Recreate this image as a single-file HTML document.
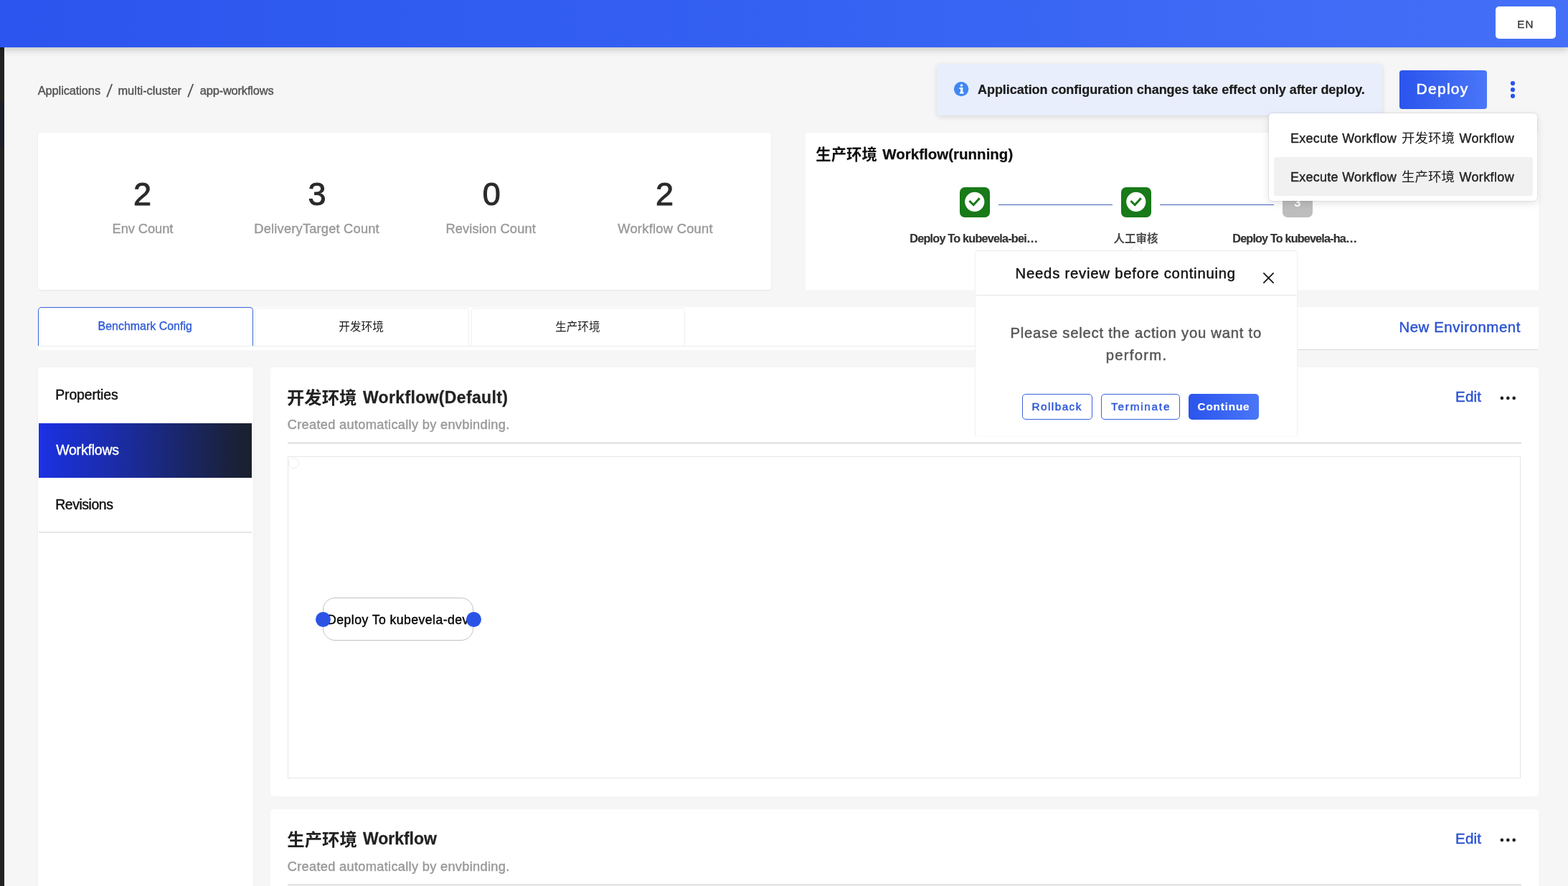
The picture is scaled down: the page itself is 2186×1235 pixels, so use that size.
<!DOCTYPE html>
<html lang="en">
<head>
<meta charset="utf-8">
<title>app-workflows</title>
<style>
*{box-sizing:border-box;margin:0;padding:0}
html,body{width:2186px;height:1235px;overflow:hidden}
body{position:relative;background:#f6f6f6;font-family:"Liberation Sans",sans-serif;color:#333}
.a{position:absolute}
.t{position:absolute;white-space:nowrap;line-height:1;font-family:"Liberation Sans",sans-serif}
.k{position:absolute;overflow:visible}
.k text{font-family:"Liberation Sans","Noto Sans CJK SC",sans-serif}
#textlayer{position:absolute;left:0;top:0;width:2186px;height:1235px;will-change:transform}
.card{position:absolute;background:#fff}
/* top bar */
#topbar{left:0;top:0;width:2186px;height:66px;background:linear-gradient(90deg,#2b55ee 0%,#3561f2 50%,#4470f8 100%);box-shadow:0 2px 11px rgba(0,0,0,.24)}
#strip1{left:0;top:66px;width:5.9px;height:1169px;background:#222}
#strip2{left:0;top:143px;width:5.9px;height:62px;background:#1a1f2b}
#en{left:2085px;top:9px;width:84px;height:45px;background:#fff;border-radius:5px}
/* alert */
#alert{left:1306.4px;top:89px;width:620.8px;height:72px;background:#e8eefc;border-radius:4px;box-shadow:0 2px 7px rgba(0,0,0,.12)}
#deploybtn{left:1951.3px;top:98.1px;width:121.5px;height:53.7px;border-radius:4px;background:linear-gradient(90deg,#2a54ec 0%,#4a76f8 100%)}
/* dropdown */
#dd{left:1768.7px;top:158.2px;width:374.7px;height:122px;background:#fff;border-radius:5px;box-shadow:0 3px 11px rgba(0,0,0,.12),0 0 0 1px rgba(0,0,0,.055)}
#ddhi{left:1776px;top:218.9px;width:360.8px;height:54.3px;background:#f1f1f1;border-radius:3px}
/* cards */
#stats{left:53px;top:185px;width:1022px;height:218.5px;border-radius:4px;box-shadow:0 1px 3px rgba(0,0,0,.07)}
#wf{left:1123px;top:185px;width:1022px;height:219px}
.step{position:absolute;top:261px;width:42px;height:42px;border-radius:7px;background:#187a18}
.line{position:absolute;top:284.9px;height:1px;background:#4561bb}
/* popup */
#pop{left:1359px;top:349px;width:450px;height:260.4px;background:#fff;border:1px solid #f1f0f1;border-top-color:#e9e9e9;border-bottom-color:#fafafa;border-radius:4px}
#poparrow{left:1576.4px;top:342.4px;width:15.6px;height:15.6px;background:#fff;border-left:1px solid #e9e9e9;border-top:1px solid #e9e9e9;transform:rotate(45deg)}
#popdiv{left:1360.6px;top:411.1px;width:446.8px;height:1px;background:#e6e6e6}
.btn{position:absolute;top:549.2px;height:35.4px;border-radius:5px;border:1px solid #3c62da;background:#fff}
/* tabs */
#tabs{left:53px;top:428px;width:2092px;height:60px}
#tabline1{left:53px;top:482.4px;width:1755px;height:1px;background:#ebebeb}
#tabline2{left:1808px;top:486.8px;width:337px;height:1px;background:#dadada}
#tab1{left:53px;top:428px;width:300px;height:55px;border:1px solid #3a62d8;border-bottom:none;border-radius:5px 5px 0 0;background:#fff}
.tabx{position:absolute;top:428.5px;height:54.5px;border:1px solid #f0f0f0;border-bottom:none;border-radius:5px 5px 0 0;background:#fff}
/* menu */
#menu{left:53px;top:512px;width:299.7px;height:740px;border-radius:4px;box-shadow:0 1px 3px rgba(0,0,0,.06)}
#menuact{left:54.2px;top:590.2px;width:296.8px;height:75.5px;background:linear-gradient(90deg,#1c31e4 0%,#1a2b9a 43%,#1a2668 68%,#1a2244 86%,#1b202b 100%)}
#menudiv{left:54px;top:741.2px;width:297px;height:1.4px;background:#e7e7e7}
/* main cards */
#c1{left:377px;top:512px;width:1768px;height:597.6px;border-radius:5px}
#c2{left:377px;top:1128px;width:1768px;height:130px;border-radius:5px}
.hr{position:absolute;left:401.2px;width:1719.6px;height:1px;background:#c6c6c6}
#canvas{left:401.2px;top:636.1px;width:1719.2px;height:449.3px;border:1px solid #e6e6e6;background:#fff}
#mini{left:402.3px;top:638.2px;width:14.5px;height:14.5px;border:1px solid #ececec;border-radius:50%}
#node{left:450px;top:833px;width:210px;height:60px;border:1px solid #c2c2c2;border-radius:17px;background:#fff}
.port{position:absolute;top:853.2px;width:20.8px;height:20.8px;border-radius:50%;background:#2b54e6;z-index:5}
</style>
</head>
<body>

<!-- base cards -->
<div class="card" id="stats"></div>
<div class="card" id="wf"></div>

<!-- workflow steps -->
<div class="step" style="left:1338px"></div>
<div class="step" style="left:1563px"></div>
<div class="step" style="left:1788px;background:#bdbdbd"></div>
<div class="t" style="left:1804.3px;top:274.3px;font-size:16.2px;font-weight:700;color:#fff">3</div>
<div class="line" style="left:1392.3px;width:158.7px"></div>
<div class="line" style="left:1617.4px;width:158.2px"></div>
<svg class="a" style="left:1338px;top:261px" width="42" height="42" viewBox="0 0 42 42"><circle cx="20.8" cy="20.3" r="13.6" fill="#fff"/><path d="M13.4 19.0 L19.2 24.6 L27.7 15.3" fill="none" stroke="#187a18" stroke-width="3"/></svg>
<svg class="a" style="left:1563px;top:261px" width="42" height="42" viewBox="0 0 42 42"><circle cx="20.8" cy="20.3" r="13.6" fill="#fff"/><path d="M13.4 19.0 L19.2 24.6 L27.7 15.3" fill="none" stroke="#187a18" stroke-width="3"/></svg>

<!-- tabs -->
<div class="card" id="tabs"></div>
<div class="a" id="tab1"></div>
<div class="tabx" style="left:355px;width:299px"></div>
<div class="tabx" style="left:656.6px;width:298.8px"></div>
<div class="a" id="tabline1"></div>
<div class="a" id="tabline2"></div>

<!-- left menu -->
<div class="card" id="menu"></div>
<div class="a" id="menuact"></div>
<div class="a" id="menudiv"></div>

<!-- main cards -->
<div class="card" id="c1"></div>
<div class="hr" style="top:616.8px"></div>
<div class="a" id="canvas"></div>
<div class="a" id="mini"></div>
<div class="a" id="node"></div>
<div class="port" style="left:439.9px"></div>
<div class="port" style="left:650.3px"></div>
<svg class="a" style="left:2088px;top:550px" width="30" height="10" viewBox="0 0 30 10"><circle cx="5.9" cy="4.9" r="2.3" fill="#222"/><circle cx="14.3" cy="4.9" r="2.3" fill="#222"/><circle cx="22.7" cy="4.9" r="2.3" fill="#222"/></svg>

<div class="card" id="c2"></div>
<div class="hr" style="top:1233.2px"></div>
<svg class="a" style="left:2088px;top:1166px" width="30" height="10" viewBox="0 0 30 10"><circle cx="5.9" cy="4.9" r="2.3" fill="#222"/><circle cx="14.3" cy="4.9" r="2.3" fill="#222"/><circle cx="22.7" cy="4.9" r="2.3" fill="#222"/></svg>

<!-- left dark strip + top bar -->
<div class="a" id="strip1"></div>
<div class="a" id="strip2"></div>
<div class="a" id="topbar"></div>
<div class="a" id="en"></div>

<!-- alert + deploy -->
<div class="a" id="alert"></div>
<svg class="a" style="left:1329.9px;top:113.8px;overflow:visible" width="21" height="21" viewBox="0 0 21 21"><circle cx="10.1" cy="10.1" r="10.2" fill="#4187f2"/><circle cx="10.5" cy="4.9" r="1.75" fill="#fff"/><path d="M7.4 7.9H12.3V14.5H13.6V16.5H7.9V14.5H9.1V9.9H7.4Z" fill="#fff"/></svg>
<div class="a" id="deploybtn"></div>
<svg class="a" style="left:2103.5px;top:111px" width="10" height="28" viewBox="0 0 10 28"><circle cx="5" cy="5.1" r="3.1" fill="#2a54ec"/><circle cx="5" cy="14.1" r="3.1" fill="#2a54ec"/><circle cx="5" cy="22.8" r="3.1" fill="#2a54ec"/></svg>

<!-- popup -->
<div class="a" id="poparrow"></div>
<div class="a" id="pop"></div>
<div class="a" style="left:1573px;top:350.6px;width:23px;height:8px;background:#fff"></div>
<div class="a" id="popdiv"></div>
<svg class="a" style="left:1760.2px;top:379.2px" width="17" height="17" viewBox="0 0 17 17"><path d="M1.4 1.4 L15.6 15.6 M15.6 1.4 L1.4 15.6" stroke="#111" stroke-width="1.7" fill="none"/></svg>
<div class="btn" style="left:1425.3px;width:97.4px"></div>
<div class="btn" style="left:1535.3px;width:109.4px"></div>
<div class="btn" style="left:1657.3px;width:97.4px;border:none;background:linear-gradient(90deg,#2a54ec 0%,#4a76f8 100%)"></div>

<!-- dropdown -->
<div class="a" id="dd"></div>
<div class="a" id="ddhi"></div>

<!-- breadcrumb slashes -->
<svg class="a" style="left:146px;top:115px" width="14" height="23" viewBox="0 0 14 23"><path d="M3.1 20.3 L10.2 2" stroke="#555" stroke-width="1.9" fill="none"/></svg>
<svg class="a" style="left:259.4px;top:115px" width="14" height="23" viewBox="0 0 14 23"><path d="M3.1 20.3 L10.2 2" stroke="#555" stroke-width="1.9" fill="none"/></svg>
<!-- text -->
<div id="textlayer">
<div class="t" id="t_bc1" style="left:52.70px;top:117.71px;font-size:16.4px;font-weight:400;color:#4f4f4f;letter-spacing:-0.089px;-webkit-text-stroke:0.36px #4f4f4f">Applications</div>
<div class="t" id="t_bc3" style="left:164.40px;top:117.71px;font-size:16.4px;font-weight:400;color:#4f4f4f;letter-spacing:0.027px;-webkit-text-stroke:0.36px #4f4f4f">multi-cluster</div>
<div class="t" id="t_bc5" style="left:278.80px;top:117.71px;font-size:16.4px;font-weight:400;color:#4f4f4f;letter-spacing:-0.163px;-webkit-text-stroke:0.36px #4f4f4f">app-workflows</div>
<div class="t" id="t_en" style="left:2115.30px;top:26.03px;font-size:15.2px;font-weight:400;color:#383838;letter-spacing:0.970px;-webkit-text-stroke:0.33px #383838">EN</div>
<div class="t" id="t_alert" style="left:1363.00px;top:115.86px;font-size:18.0px;font-weight:700;color:#1c1c1c;letter-spacing:-0.047px;-webkit-text-stroke:0.22px #1c1c1c">Application configuration changes take effect only after deploy.</div>
<div class="t" id="t_deploy" style="left:1974.60px;top:113.42px;font-size:21.0px;font-weight:400;color:#fff;letter-spacing:1.266px;-webkit-text-stroke:0.59px #fff">Deploy</div>
<div class="t" id="t_dd1a" style="left:1799.00px;top:183.96px;font-size:18.0px;font-weight:400;color:#222;letter-spacing:0.265px;-webkit-text-stroke:0.40px #222">Execute Workflow</div>
<div class="t" id="t_dd1b" style="left:2034.40px;top:183.96px;font-size:18.0px;font-weight:400;color:#222;letter-spacing:0.374px;-webkit-text-stroke:0.40px #222">Workflow</div>
<div class="t" id="t_dd2a" style="left:1799.00px;top:237.86px;font-size:18.0px;font-weight:400;color:#222;letter-spacing:0.265px;-webkit-text-stroke:0.40px #222">Execute Workflow</div>
<div class="t" id="t_dd2b" style="left:2034.40px;top:237.86px;font-size:18.0px;font-weight:400;color:#222;letter-spacing:0.374px;-webkit-text-stroke:0.40px #222">Workflow</div>
<div class="t" id="t_n1" style="left:186.00px;top:248.40px;font-size:45.0px;font-weight:400;color:#2a2a2a;letter-spacing:0.000px;-webkit-text-stroke:0.99px #2a2a2a">2</div>
<div class="t" id="t_n2" style="left:429.50px;top:248.40px;font-size:45.0px;font-weight:400;color:#2a2a2a;letter-spacing:0.000px;-webkit-text-stroke:0.99px #2a2a2a">3</div>
<div class="t" id="t_n3" style="left:672.70px;top:248.40px;font-size:45.0px;font-weight:400;color:#2a2a2a;letter-spacing:0.000px;-webkit-text-stroke:0.99px #2a2a2a">0</div>
<div class="t" id="t_n4" style="left:914.00px;top:248.40px;font-size:45.0px;font-weight:400;color:#2a2a2a;letter-spacing:0.000px;-webkit-text-stroke:0.99px #2a2a2a">2</div>
<div class="t" id="t_l1" style="left:156.50px;top:309.71px;font-size:18.3px;font-weight:400;color:#999;letter-spacing:-0.060px;-webkit-text-stroke:0.40px #999">Env Count</div>
<div class="t" id="t_l2" style="left:354.30px;top:309.71px;font-size:18.3px;font-weight:400;color:#999;letter-spacing:0.194px;-webkit-text-stroke:0.40px #999">DeliveryTarget Count</div>
<div class="t" id="t_l3" style="left:621.40px;top:309.71px;font-size:18.3px;font-weight:400;color:#999;letter-spacing:0.108px;-webkit-text-stroke:0.40px #999">Revision Count</div>
<div class="t" id="t_l4" style="left:861.20px;top:309.71px;font-size:18.3px;font-weight:400;color:#999;letter-spacing:0.284px;-webkit-text-stroke:0.40px #999">Workflow Count</div>
<div class="t" id="t_wft" style="left:1230.30px;top:204.94px;font-size:20.5px;font-weight:700;color:#0d0d0d;letter-spacing:0.007px;-webkit-text-stroke:0.25px #0d0d0d">Workflow(running)</div>
<div class="t" id="t_s1" style="left:1268.30px;top:323.88px;font-size:16.2px;font-weight:700;color:#333;letter-spacing:-0.773px;-webkit-text-stroke:0.19px #333">Deploy To kubevela-bei…</div>
<div class="t" id="t_s3" style="left:1718.30px;top:323.88px;font-size:16.2px;font-weight:700;color:#333;letter-spacing:-0.834px;-webkit-text-stroke:0.19px #333">Deploy To kubevela-ha…</div>
<div class="t" id="t_pt" style="left:1415.60px;top:370.61px;font-size:20.3px;font-weight:400;color:#111;letter-spacing:0.772px;-webkit-text-stroke:0.45px #111">Needs review before continuing</div>
<div class="t" id="t_pb1" style="left:1408.50px;top:454.21px;font-size:20.3px;font-weight:400;color:#555;letter-spacing:0.746px;-webkit-text-stroke:0.45px #555">Please select the action you want to</div>
<div class="t" id="t_pb2" style="left:1541.80px;top:484.81px;font-size:20.3px;font-weight:400;color:#555;letter-spacing:1.246px;-webkit-text-stroke:0.45px #555">perform.</div>
<div class="t" id="t_b1" style="left:1438.60px;top:558.85px;font-size:15.3px;font-weight:400;color:#2b55d8;letter-spacing:1.441px;-webkit-text-stroke:0.43px #2b55d8">Rollback</div>
<div class="t" id="t_b2" style="left:1549.10px;top:558.85px;font-size:15.3px;font-weight:400;color:#2b55d8;letter-spacing:1.768px;-webkit-text-stroke:0.43px #2b55d8">Terminate</div>
<div class="t" id="t_b3" style="left:1669.60px;top:558.85px;font-size:15.3px;font-weight:700;color:#fff;letter-spacing:0.819px;-webkit-text-stroke:0.18px #fff">Continue</div>
<div class="t" id="t_tab1" style="left:136.60px;top:446.84px;font-size:15.9px;font-weight:400;color:#2f5bd6;letter-spacing:0.035px;-webkit-text-stroke:0.35px #2f5bd6">Benchmark Config</div>
<div class="t" id="t_newenv" style="left:1950.40px;top:445.73px;font-size:20.4px;font-weight:400;color:#2a52d0;letter-spacing:0.581px;-webkit-text-stroke:0.45px #2a52d0">New Environment</div>
<div class="t" id="t_m1" style="left:77.20px;top:540.77px;font-size:19.4px;font-weight:400;color:#111;letter-spacing:-0.098px;-webkit-text-stroke:0.43px #111">Properties</div>
<div class="t" id="t_m2" style="left:78.20px;top:617.57px;font-size:19.4px;font-weight:400;color:#fff;letter-spacing:-0.159px;-webkit-text-stroke:0.43px #fff">Workflows</div>
<div class="t" id="t_m3" style="left:77.20px;top:693.97px;font-size:19.4px;font-weight:400;color:#111;letter-spacing:-0.420px;-webkit-text-stroke:0.43px #111">Revisions</div>
<div class="t" id="t_c1t" style="left:505.90px;top:542.93px;font-size:23.0px;font-weight:700;color:#222;letter-spacing:0.351px;-webkit-text-stroke:0.28px #222">Workflow(Default)</div>
<div class="t" id="t_c1s" style="left:400.70px;top:582.61px;font-size:18.3px;font-weight:400;color:#999;letter-spacing:0.280px;-webkit-text-stroke:0.40px #999">Created automatically by envbinding.</div>
<div class="t" id="t_edit1" style="left:2029.10px;top:543.36px;font-size:20.6px;font-weight:400;color:#2a52d0;letter-spacing:0.112px;-webkit-text-stroke:0.45px #2a52d0">Edit</div>
<div class="t" id="t_c2t" style="left:505.90px;top:1158.33px;font-size:23.0px;font-weight:700;color:#222;letter-spacing:-0.012px;-webkit-text-stroke:0.28px #222">Workflow</div>
<div class="t" id="t_c2s" style="left:400.70px;top:1198.51px;font-size:18.3px;font-weight:400;color:#999;letter-spacing:0.280px;-webkit-text-stroke:0.40px #999">Created automatically by envbinding.</div>
<div class="t" id="t_edit2" style="left:2029.10px;top:1159.16px;font-size:20.6px;font-weight:400;color:#2a52d0;letter-spacing:0.112px;-webkit-text-stroke:0.45px #2a52d0">Edit</div>
<div class="t" id="nodetxt" style="left:456.11px;top:856.11px;font-size:17.7px;color:#000;letter-spacing:0.418px;-webkit-text-stroke:0.39px #000">Deploy To kubevela-dev</div>
</div>
<svg class="k" style="left:1953.00px;top:181.90px" width="76.20" height="21.00" viewBox="0 0 76.20 21.00"><text x="1.04" y="17.47" font-size="18.5" fill="#1a1a1a">开发环境</text></svg>
<svg class="k" style="left:1953.00px;top:236.00px" width="76.20" height="20.90" viewBox="0 0 76.20 20.90"><text x="1.00" y="17.32" font-size="18.5" fill="#1a1a1a">生产环境</text></svg>
<svg class="k" style="left:1136.20px;top:202.70px" width="88.30" height="23.60" viewBox="0 0 88.30 23.60"><text x="1.36" y="19.52" font-size="21.4" font-weight="700" fill="#0d0d0d">生产环境</text></svg>
<svg class="k" style="left:1551.30px;top:322.80px" width="65.10" height="18.60" viewBox="0 0 65.10 18.60"><text x="1.57" y="15.22" font-size="15.5" font-weight="700" fill="#4a4a4a">人工审核</text></svg>
<svg class="k" style="left:471.30px;top:445.30px" width="65.10" height="19.00" viewBox="0 0 65.10 19.00"><text x="1.19" y="15.65" font-size="15.7" fill="#1a1a1a">开发环境</text></svg>
<svg class="k" style="left:773.00px;top:445.50px" width="64.90" height="18.80" viewBox="0 0 64.90 18.80"><text x="1.16" y="15.42" font-size="15.6" fill="#1a1a1a">生产环境</text></svg>
<svg class="k" style="left:399.20px;top:540.80px" width="99.90" height="26.10" viewBox="0 0 99.90 26.10"><text x="0.95" y="21.92" font-size="24.4" font-weight="700" fill="#222">开发环境</text></svg>
<svg class="k" style="left:399.20px;top:1156.90px" width="99.90" height="25.90" viewBox="0 0 99.90 25.90"><text x="1.27" y="21.57" font-size="24.4" font-weight="700" fill="#222">生产环境</text></svg>
</body>
</html>
